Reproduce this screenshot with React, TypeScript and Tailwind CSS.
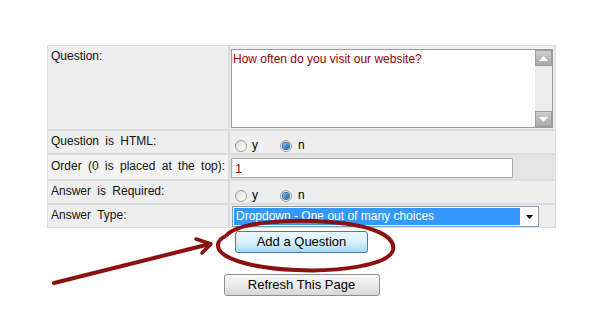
import React from 'react';

// Classic grey form table with an annotation (red ring + arrow) pointing at the submit button.

function Radio({ checked }: { checked?: boolean }) {
  return (
    <span className="relative inline-block h-[12px] w-[12px] rounded-full border border-[#9a9a9a] bg-gradient-to-br from-[#dcdcdc] to-white">
      {checked && (
        <span className="absolute left-[2px] top-[2px] h-[6px] w-[6px] rounded-full bg-gradient-to-br from-[#7fc0ee] to-[#135a9a] ring-1 ring-[#2d6aa0]" />
      )}
    </span>
  );
}

function RadioPair() {
  return (
    <div className="flex h-full items-end pb-px pl-[5px] text-[12px] text-black">
      <Radio />
      <span className="ml-[5px] mr-[22px] leading-[14px]">y</span>
      <Radio checked />
      <span className="ml-[6px] leading-[14px]">n</span>
    </div>
  );
}

function ScrollBtn({ up }: { up?: boolean }) {
  return (
    <div className="flex h-[16px] w-[17px] items-center justify-center border border-[#9c9c9c] bg-gradient-to-b from-[#cfcfcf] to-[#a9a9a9]">
      <svg width="9" height="5" viewBox="0 0 9 5">
        <path d={up ? 'M0 5 L4.5 0 L9 5 Z' : 'M0 0 L4.5 5 L9 0 Z'} fill="#ffffff" />
      </svg>
    </div>
  );
}

export default function App() {
  const label = 'pl-[3px] pt-[3px] leading-[14px] text-[#111] [word-spacing:3px]';
  return (
    <div className="relative h-[328px] w-[599px] overflow-hidden bg-white font-['Liberation_Sans',Arial,sans-serif] text-[12px]">
      <div className="pl-[47px] pt-[45px]">
        <div className="grid w-[509px] grid-cols-[180px_325px] grid-rows-[83px_22px_24px_22px_22px] gap-[2px] bg-[#dcdcdc] p-px">
          {/* Question */}
          <div className={`bg-[#eeeeee] ${label}`}>Question:</div>
          <div className="bg-[#eeeeee] pl-px pt-[3px]">
            <div className="flex h-[79px] w-[322px] border border-[#9a9a9a] bg-white">
              <div className="flex-1 pl-[1px] pt-[2px] leading-[14px] text-[#990000]">
                How often do you visit our website?
              </div>
              <div className="flex w-[17px] flex-col justify-between bg-[#ececec]">
                <ScrollBtn up />
                <ScrollBtn />
              </div>
            </div>
          </div>

          {/* Question is HTML */}
          <div className={`bg-[#eeeeee] ${label}`}>Question is HTML:</div>
          <div className="bg-[#eeeeee]">
            <RadioPair />
          </div>

          {/* Order */}
          <div className={`bg-[#f3f3f3] ${label} pl-[3px] pt-[4px]`}>Order (0 is placed at the top):</div>
          <div className="bg-[#e4e4e4] pl-px pt-[3px]">
            <div className="h-[20px] w-[282px] border border-[#a5acb2] bg-white pl-[3px] text-[13px] leading-[19px] text-[#990000]">
              1
            </div>
          </div>

          {/* Answer is Required */}
          <div className={`bg-[#eeeeee] ${label}`}>Answer is Required:</div>
          <div className="bg-[#eeeeee]">
            <RadioPair />
          </div>

          {/* Answer Type */}
          <div className={`bg-[#eeeeee] ${label}`}>Answer Type:</div>
          <div className="bg-[#eeeeee] pl-[2px] pt-px">
            <div className="flex h-[21px] w-[307px] items-center border border-[#7f9db9] bg-white pl-px">
              <div className="h-[17px] w-[286px] bg-[#3399ff] pl-[2px] leading-[17px] text-white">
                Dropdown - One out of many choices
              </div>
              <div className="flex flex-1 items-center justify-center">
                <svg width="7" height="4" viewBox="0 0 7 4">
                  <path d="M0 0 L7 0 L3.5 4 Z" fill="#000" />
                </svg>
              </div>
            </div>
          </div>
        </div>

        <div className="flex w-[509px] flex-col items-center">
          <button className="mt-[3px] h-[22px] w-[133px] rounded-[3px] border border-[#3c7fb1] bg-gradient-to-b from-[#eaf6fd] via-[#d9f0fc] to-[#a7d9f5] text-[13px] leading-[20px] text-black">
            Add a Question
          </button>
          <button className="mt-[21px] h-[22px] w-[156px] rounded-[3px] border border-[#8e8e8e] bg-gradient-to-b from-[#f7f7f7] via-[#ebebeb] to-[#d6d6d6] text-[13px] leading-[20px] text-black">
            Refresh This Page
          </button>
        </div>
      </div>

      {/* annotation overlay */}
      <svg className="pointer-events-none absolute left-0 top-0" width="599" height="328" viewBox="0 0 599 328">
        <path
          d="M226 236 C236 222 290 219 330 222 C372 225 396 236 393 250 C389 265 340 272 296 270 C250 268 216 258 218 244 C219 240 221 238 226 236"
          fill="none"
          stroke="#8b1111"
          strokeWidth="4"
        />
        <path d="M54 283 L210 244" stroke="#8b1111" strokeWidth="4" strokeLinecap="round" fill="none" />
        <path d="M196 239 L211 244 L202 253" stroke="#8b1111" strokeWidth="3.5" strokeLinecap="round" strokeLinejoin="round" fill="none" />
      </svg>
    </div>
  );
}
